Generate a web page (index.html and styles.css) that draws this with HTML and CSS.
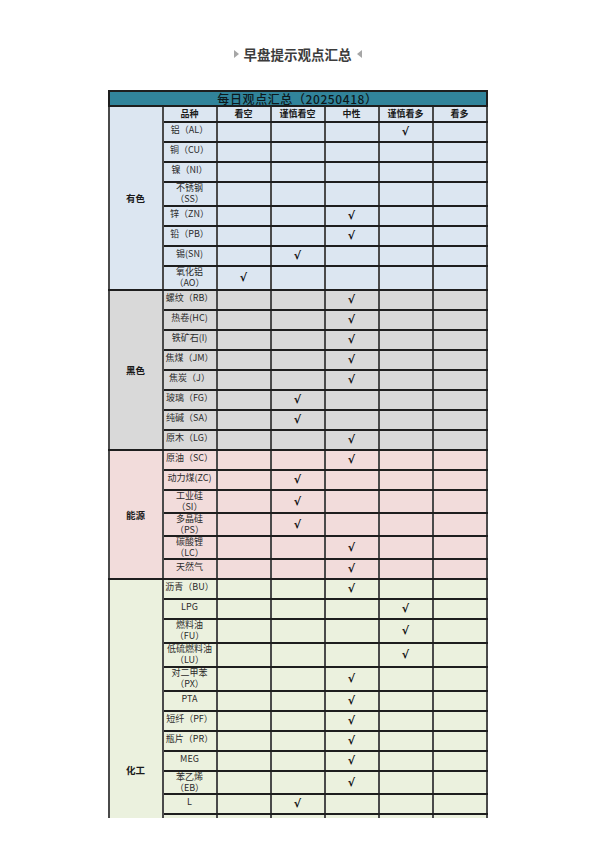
FILE: index.html
```html
<!DOCTYPE html>
<html lang="zh">
<head>
<meta charset="utf-8">
<title>早盘提示观点汇总</title>
<link rel="stylesheet" href="styles.css">
</head>
<body>
<div class="page">
  <h1 class="title"><span class="tri tri-r"></span><span>早盘提示观点汇总</span><span class="tri tri-l"></span></h1>
  <div class="clip">
    <table class="sheet">
      <colgroup>
        <col class="col"><col class="col"><col class="col"><col class="col"><col class="col"><col class="col"><col class="col">
      </colgroup>
      <tr class="cap"><td colspan="7">每日观点汇总（20250418）</td></tr>
      <tr class="head blue"><td class="cat" rowspan="9">有色</td><th>品种</th><th>看空</th><th>谨慎看空</th><th>中性</th><th>谨慎看多</th><th>看多</th></tr>
      <tr class="s blue"><td class="nm">铝（AL）</td><td></td><td></td><td></td><td class="ck">√</td><td></td></tr>
      <tr class="s blue"><td class="nm">铜（CU）</td><td></td><td></td><td></td><td></td><td></td></tr>
      <tr class="s blue"><td class="nm">镍（NI）</td><td></td><td></td><td></td><td></td><td></td></tr>
      <tr class="d blue"><td class="nm two">不锈钢<br>（SS）</td><td></td><td></td><td></td><td></td><td></td></tr>
      <tr class="s blue"><td class="nm">锌（ZN）</td><td></td><td></td><td class="ck">√</td><td></td><td></td></tr>
      <tr class="s blue"><td class="nm">铅（PB）</td><td></td><td></td><td class="ck">√</td><td></td><td></td></tr>
      <tr class="s blue"><td class="nm">锡(SN)</td><td></td><td class="ck">√</td><td></td><td></td><td></td></tr>
      <tr class="d blue"><td class="nm two">氧化铝<br>（AO）</td><td class="ck">√</td><td></td><td></td><td></td><td></td></tr>

      <tr class="s gray"><td class="cat" rowspan="8">黑色</td><td class="nm">螺纹（RB）</td><td></td><td></td><td class="ck">√</td><td></td><td></td></tr>
      <tr class="s gray"><td class="nm">热卷(HC)</td><td></td><td></td><td class="ck">√</td><td></td><td></td></tr>
      <tr class="s gray"><td class="nm">铁矿石(I)</td><td></td><td></td><td class="ck">√</td><td></td><td></td></tr>
      <tr class="s gray"><td class="nm">焦煤（JM）</td><td></td><td></td><td class="ck">√</td><td></td><td></td></tr>
      <tr class="s gray"><td class="nm">焦炭（J）</td><td></td><td></td><td class="ck">√</td><td></td><td></td></tr>
      <tr class="s gray"><td class="nm">玻璃（FG）</td><td></td><td class="ck">√</td><td></td><td></td><td></td></tr>
      <tr class="s gray"><td class="nm">纯碱（SA）</td><td></td><td class="ck">√</td><td></td><td></td><td></td></tr>
      <tr class="s gray"><td class="nm">原木（LG）</td><td></td><td></td><td class="ck">√</td><td></td><td></td></tr>

      <tr class="s pink"><td class="cat" rowspan="6">能源</td><td class="nm">原油（SC）</td><td></td><td></td><td class="ck">√</td><td></td><td></td></tr>
      <tr class="s pink"><td class="nm">动力煤(ZC)</td><td></td><td class="ck">√</td><td></td><td></td><td></td></tr>
      <tr class="t pink"><td class="nm two">工业硅<br>（SI）</td><td></td><td class="ck">√</td><td></td><td></td><td></td></tr>
      <tr class="t pink"><td class="nm two">多晶硅<br>（PS）</td><td></td><td class="ck">√</td><td></td><td></td><td></td></tr>
      <tr class="t pink"><td class="nm two">碳酸锂<br>（LC）</td><td></td><td></td><td class="ck">√</td><td></td><td></td></tr>
      <tr class="s pink"><td class="nm">天然气</td><td></td><td></td><td class="ck">√</td><td></td><td></td></tr>

      <tr class="s green"><td class="cat" rowspan="18">化工</td><td class="nm">沥青（BU）</td><td></td><td></td><td class="ck">√</td><td></td><td></td></tr>
      <tr class="s green"><td class="nm">LPG</td><td></td><td></td><td></td><td class="ck">√</td><td></td></tr>
      <tr class="d green"><td class="nm two">燃料油<br>（FU）</td><td></td><td></td><td></td><td class="ck">√</td><td></td></tr>
      <tr class="d green"><td class="nm two">低硫燃料油<br>（LU）</td><td></td><td></td><td></td><td class="ck">√</td><td></td></tr>
      <tr class="d green"><td class="nm two">对二甲苯<br>（PX）</td><td></td><td></td><td class="ck">√</td><td></td><td></td></tr>
      <tr class="s green"><td class="nm">PTA</td><td></td><td></td><td class="ck">√</td><td></td><td></td></tr>
      <tr class="s green"><td class="nm">短纤（PF）</td><td></td><td></td><td class="ck">√</td><td></td><td></td></tr>
      <tr class="s green"><td class="nm">瓶片（PR）</td><td></td><td></td><td class="ck">√</td><td></td><td></td></tr>
      <tr class="s green"><td class="nm">MEG</td><td></td><td></td><td class="ck">√</td><td></td><td></td></tr>
      <tr class="t green"><td class="nm two">苯乙烯<br>（EB）</td><td></td><td></td><td class="ck">√</td><td></td><td></td></tr>
      <tr class="s green"><td class="nm">L</td><td></td><td class="ck">√</td><td></td><td></td><td></td></tr>
      <tr class="x green"><td class="nm"></td><td></td><td></td><td></td><td></td><td></td></tr>
      <tr class="x green"><td class="nm"></td><td></td><td></td><td></td><td></td><td></td></tr>
      <tr class="x green"><td class="nm"></td><td></td><td></td><td></td><td></td><td></td></tr>
      <tr class="x green"><td class="nm"></td><td></td><td></td><td></td><td></td><td></td></tr>
      <tr class="x green"><td class="nm"></td><td></td><td></td><td></td><td></td><td></td></tr>
      <tr class="x green"><td class="nm"></td><td></td><td></td><td></td><td></td><td></td></tr>
      <tr class="x green"><td class="nm"></td><td></td><td></td><td></td><td></td><td></td></tr>
    </table>
  </div>
</div>
</body>
</html>
```

FILE: styles.css
```css
html, body {
  margin: 0;
  padding: 0;
  background: #ffffff;
}

body {
  font-family: "Noto Sans CJK SC", "Noto Sans", sans-serif;
  color: #222;
}

.page {
  width: 595px;
}

.title {
  margin: 44px 0 0;
  height: 20px;
  display: flex;
  justify-content: center;
  align-items: center;
  gap: 5px;
  font-size: 13.5px;
  line-height: 20px;
  font-weight: 700;
  color: #3c3c3c;
}

.tri {
  width: 0;
  height: 0;
  border-top: 4.5px solid transparent;
  border-bottom: 4.5px solid transparent;
}

.tri-r {
  border-left: 5px solid #a6a6a6;
}

.tri-l {
  border-right: 5px solid #a6a6a6;
}

.clip {
  width: 380px;
  height: 728px;
  margin: 26px auto 0;
  overflow: hidden;
}

.sheet {
  border-collapse: collapse;
  table-layout: fixed;
  width: 379px;
}

.col {
  width: 54px;
}

.sheet td,
.sheet th {
  padding: 0;
  border-top: 2px solid #1e1e1e;
  border-bottom: 2px solid #1e1e1e;
  border-left: 2px solid #4a4a4a;
  border-right: 2px solid #4a4a4a;
  text-align: center;
  vertical-align: middle;
  overflow: hidden;
}

.cap td {
  height: 13px;
  background: #31849b;
  font-size: 12px;
  line-height: 13px;
  letter-spacing: 0.6px;
  font-weight: 500;
  color: #0e191c;
  border-color: #1e1e1e;
}

.head th {
  height: 14px;
  font-size: 9px;
  line-height: 12px;
  font-weight: 700;
  color: #1a1a1a;
}

.blue { background: #dce6f1; }
.gray { background: #d9d9d9; }
.pink { background: #f2dcdb; }
.green { background: #ebf1de; }

.s td { height: 18px; }
.d td { height: 22px; }
.t td { height: 21px; }
.x td { height: 19px; }

.sheet td.cat {
  font-size: 9.5px;
  font-weight: 700;
  color: #1a1a1a;
}

.sheet td.nm {
  vertical-align: top;
  font-size: 9px;
  line-height: 14px;
  color: #2b2b2b;
  white-space: nowrap;
}

.sheet td.nm.two {
  line-height: 10.5px;
}

.sheet td.ck {
  font-family: "DejaVu Sans", sans-serif;
  font-size: 11px;
  font-weight: 700;
  line-height: 12px;
  color: #111;
}
```
